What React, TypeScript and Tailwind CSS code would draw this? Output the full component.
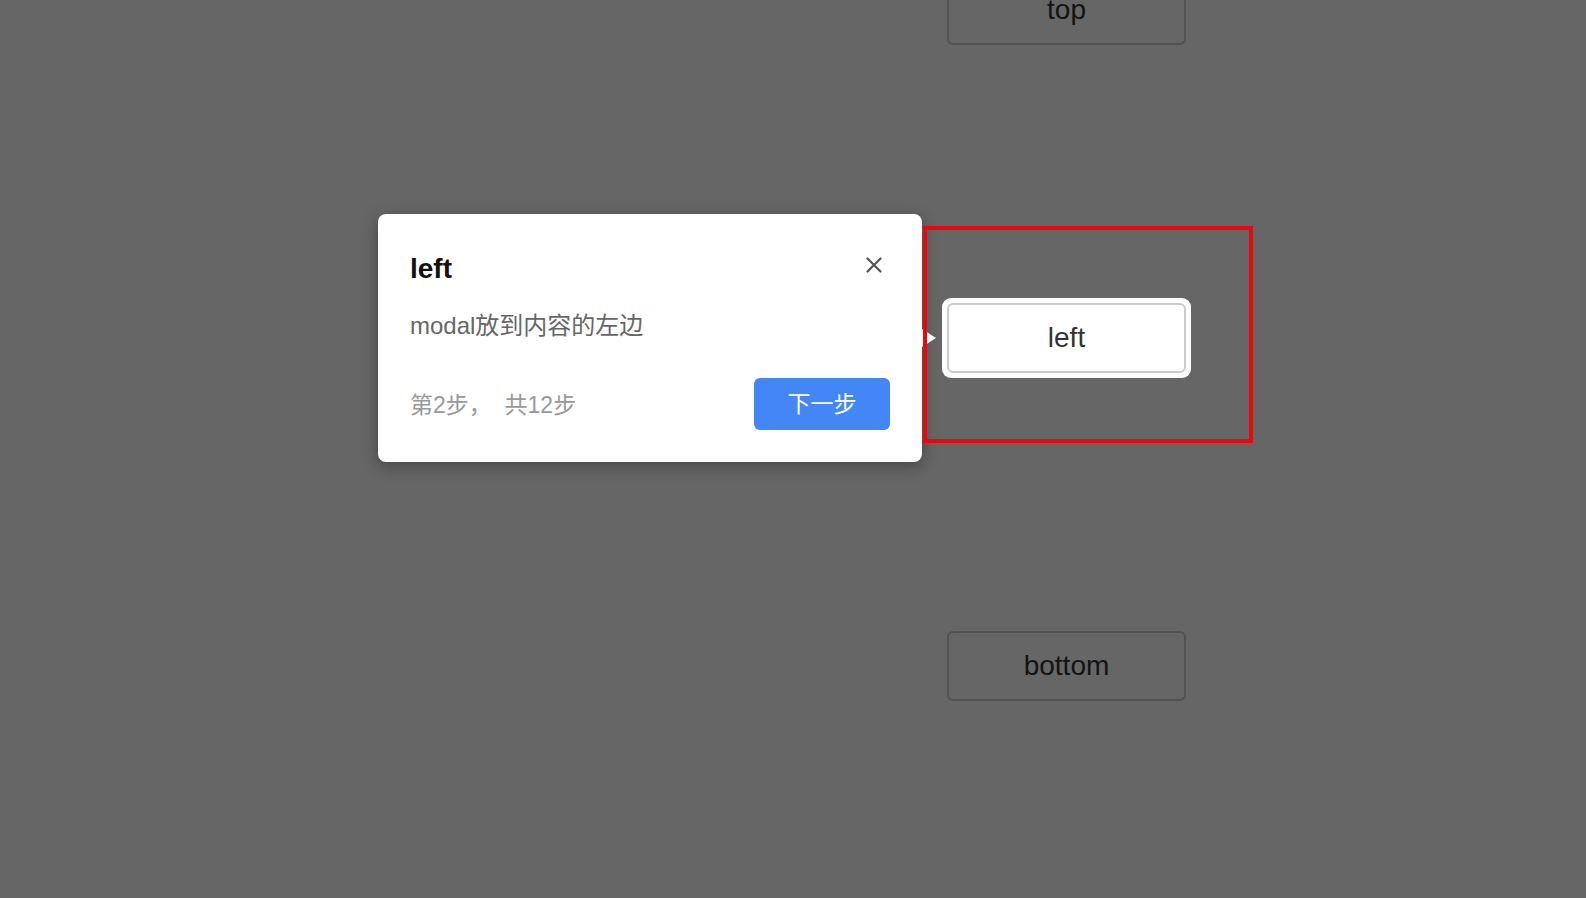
import React from "react";

const btn =
  "flex h-[70px] w-[239px] items-center justify-center rounded-[6px] border-2 border-[#cccccc] bg-white text-[28px] leading-none text-[#333333]";

export default function App() {
  return (
    <div
      className="relative h-screen w-full overflow-hidden bg-white"
      style={{ fontFamily: '"Liberation Sans", "Noto Sans CJK SC", sans-serif' }}
    >
      <div className="flex flex-col gap-[258px] pl-[947px]">
        <button className={`${btn} -mt-[25px]`}>top</button>

        <div className="relative h-[70px] w-[239px]">
          {/* highlight hole + overlay */}
          <div className="pointer-events-none absolute -inset-[5px] z-10 rounded-[9px] shadow-[0_0_0_3000px_rgba(0,0,0,0.6)]" />
          <button className={btn}>left</button>

          {/* popover */}
          <div className="absolute right-[calc(100%+25px)] top-1/2 z-20 flex h-[248px] w-[544px] -translate-y-1/2 flex-col rounded-[8px] bg-white px-[32px] pt-[40px] shadow-[0_4px_16px_rgba(0,0,0,0.35)]">
            <div className="text-[28px] font-bold leading-[30px] text-[#111111]">left</div>
            <div className="mt-[27px] text-[24px] leading-[30px] text-[#666666]">modal放到内容的左边</div>
            <div className="mt-[37px] flex items-center justify-between">
              <div className="mt-[2px] text-[23px] leading-[30px] text-[#999999]">
                第2步，&nbsp;&nbsp;共12步
              </div>
              <button className="flex h-[52px] w-[136px] items-center justify-center rounded-[6px] bg-[#4287f5] text-[23px] text-white">
                下一步
              </button>
            </div>
            <button className="absolute right-[40px] top-[43px] h-[16px] w-[16px]" aria-label="close">
              <svg viewBox="0 0 16 16" width="16" height="16" fill="none" stroke="#555555" strokeWidth="2.2" strokeLinecap="round">
                <path d="M1.5 1.5L14.5 14.5M14.5 1.5L1.5 14.5" />
              </svg>
            </button>
            <div className="absolute left-full top-1/2 h-0 w-0 -translate-y-1/2 border-y-[9px] border-l-[14px] border-y-transparent border-l-white" />
          </div>

          {/* red target frame */}
          <div className="pointer-events-none absolute -left-[24px] -top-[77px] z-30 h-[217px] w-[330px] border-[4px] border-[#e8080d]" />
        </div>

        <button className={btn}>bottom</button>
      </div>
    </div>
  );
}
